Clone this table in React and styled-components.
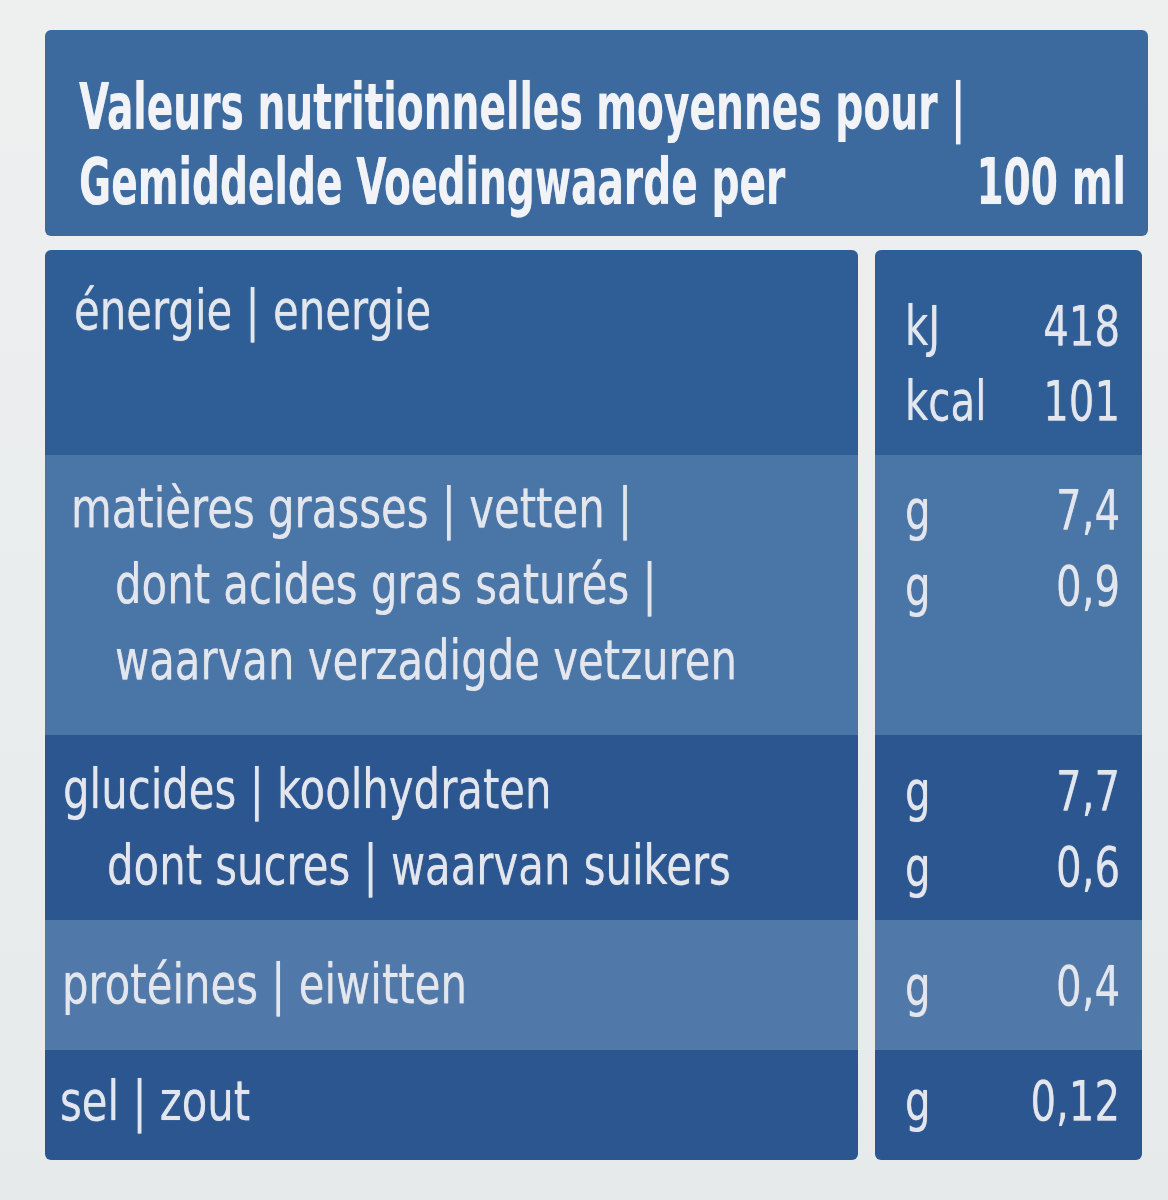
import React from 'react';
import styled, { createGlobalStyle } from 'styled-components';

const GlobalStyle = createGlobalStyle`
  html, body {
    margin: 0;
    padding: 0;
    background: #e9ecec;
  }
  body {
    font-family: "DejaVu Sans Condensed", "DejaVu Sans", sans-serif;
    font-stretch: condensed;
  }
`;

const Page = styled.div`
  width: 1168px;
  height: 1200px;
  box-sizing: border-box;
  padding: 30px 20px 0 45px;
  background: linear-gradient(180deg, #eef0f0 0%, #e6eaea 100%);
  overflow: hidden;
`;

const Header = styled.div`
  width: 1103px;
  height: 206px;
  box-sizing: border-box;
  padding: 40px 22px 0 34px;
  background: #3c6a9f;
  border-radius: 6px;
  color: #f1f3f6;
  font-weight: bold;
  font-size: 64px;
  line-height: 75px;
  text-shadow: 0 0 1px rgba(241, 243, 246, 0.6);
`;

const HeadLine = styled.div`
  display: grid;
  grid-template-columns: minmax(0, 1fr) auto;
  white-space: nowrap;
`;

const Squeeze = styled.span`
  display: inline-block;
  white-space: nowrap;
  transform: scaleX(${(p) => p.$sx || 0.82});
  transform-origin: ${(p) => (p.$right ? 'right' : 'left')} center;
`;

const Table = styled.div`
  margin-top: 14px;
  display: grid;
  grid-template-columns: 813px 267px;
  grid-template-rows: 205px 280px 185px 130px 110px;
  column-gap: 17px;
  width: 1097px;
`;

const tones = {
  dark: '#2f5e96',
  deep: '#2b5690',
  light: '#4a75a7',
  pale: '#5079aa',
};

const Cell = styled.div`
  background: ${(p) => tones[p.$tone]};
  box-sizing: border-box;
  padding-top: ${(p) => p.$top}px;
  color: #e3e6ec;
  font-size: 56px;
  line-height: 76px;
  text-shadow: 0 0 1px rgba(227, 230, 236, 0.7);
  border-radius: ${(p) =>
    p.$first ? '6px 6px 0 0' : p.$last ? '0 0 6px 6px' : '0'};
`;

const Label = styled(Cell)`
  padding-left: ${(p) => p.$left}px;
`;

const Line = styled.div`
  white-space: nowrap;
  padding-left: ${(p) => (p.$indent ? 44 : 0)}px;
  height: 76px;
`;

const Amounts = styled(Cell)`
  padding-left: 30px;
  padding-right: 22px;
`;

const AmountLine = styled.div`
  display: flex;
  justify-content: space-between;
  height: ${(p) => p.$h || 76}px;
  white-space: nowrap;
`;

const rows = [
  {
    tone: 'dark',
    top: 22,
    rtop: 38,
    left: 29,
    lines: [{ t: 'énergie | energie' }],
    amounts: [
      ['kJ', '418'],
      ['kcal', '101'],
    ],
  },
  {
    tone: 'light',
    top: 15,
    rtop: 17,
    left: 26,
    lines: [
      { t: 'matières grasses | vetten |' },
      { t: 'dont acides gras saturés |', indent: true },
      { t: 'waarvan verzadigde vetzuren', indent: true },
    ],
    amounts: [
      ['g', '7,4'],
      ['g', '0,9'],
    ],
  },
  {
    tone: 'deep',
    top: 16,
    rtop: 18,
    left: 18,
    lines: [
      { t: 'glucides | koolhydraten' },
      { t: 'dont sucres | waarvan suikers', indent: true },
    ],
    amounts: [
      ['g', '7,7'],
      ['g', '0,6'],
    ],
  },
  {
    tone: 'pale',
    top: 26,
    rtop: 28,
    left: 17,
    lines: [{ t: 'protéines | eiwitten' }],
    amounts: [['g', '0,4']],
  },
  {
    tone: 'deep',
    top: 13,
    rtop: 13,
    left: 15,
    lines: [{ t: 'sel | zout' }],
    amounts: [['g', '0,12']],
  },
];

export default function App() {
  return (
    <>
      <GlobalStyle />
      <Page>
        <Header>
          <HeadLine>
            <Squeeze $sx={0.68}>Valeurs nutritionnelles moyennes pour |</Squeeze>
          </HeadLine>
          <HeadLine>
            <Squeeze $sx={0.68}>Gemiddelde Voedingwaarde per</Squeeze>
            <Squeeze $sx={0.68} $right>100 ml</Squeeze>
          </HeadLine>
        </Header>
        <Table>
          {rows.map((row, i) => (
            <React.Fragment key={i}>
              <Label
                $tone={row.tone}
                $top={row.top}
                $left={row.left}
                $first={i === 0}
                $last={i === rows.length - 1}
              >
                {row.lines.map((l, j) => (
                  <Line key={j} $indent={l.indent}>
                    <Squeeze $sx={0.83}>{l.t}</Squeeze>
                  </Line>
                ))}
              </Label>
              <Amounts
                $tone={row.tone}
                $top={row.rtop}
                $first={i === 0}
                $last={i === rows.length - 1}
              >
                {row.amounts.map(([u, v], j) => (
                  <AmountLine key={j} $h={i === 0 ? 75 : 76}>
                    <Squeeze $sx={0.8}>{u}</Squeeze>
                    <Squeeze $sx={0.8} $right>{v}</Squeeze>
                  </AmountLine>
                ))}
              </Amounts>
            </React.Fragment>
          ))}
        </Table>
      </Page>
    </>
  );
}
